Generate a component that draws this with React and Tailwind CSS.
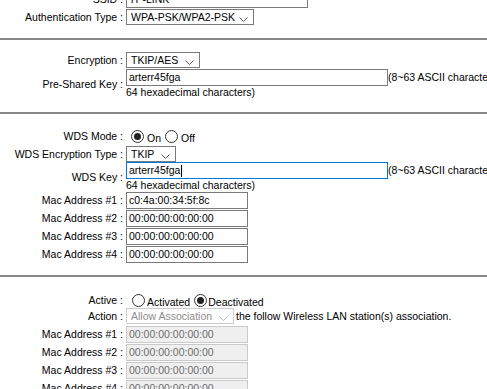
const Label = ({ children }) => (
  <div className="w-[126px] shrink-0 pr-[3px] text-right whitespace-nowrap">{children} :</div>
);

const Row = ({ label, className, children }) => (
  <div className={`flex items-center ${className}`}>
    <Label>{label}</Label>
    {children}
  </div>
);

const Chevron = ({ color }) => (
  <svg width="9" height="5" viewBox="0 0 9 5" className="mt-[4px] shrink-0">
    <path d="M0.5 0.5 L4.5 4.5 L8.5 0.5" fill="none" stroke={color} strokeWidth="1" />
  </svg>
);

const Select = ({ w, text, disabled }) => (
  <div
    className={`h-full ${w} flex items-center justify-between pl-[4px] pr-[5px] border bg-white whitespace-nowrap ${
      disabled ? 'border-[#cccccc] text-[#8d8d8d]' : 'border-[#7a7a7a] text-black'
    }`}
  >
    <span>{text}</span>
    <Chevron color={disabled ? '#b5b5b5' : '#555555'} />
  </div>
);

const Box = ({ w, text, focus, disabled, caret }) => (
  <div
    className={`h-[17px] ${w} shrink-0 flex items-center pl-[2px] border whitespace-nowrap ${
      focus ? 'border-[#0078d7] bg-white' : disabled ? 'border-[#cacaca] bg-[#efefef] text-[#6d6d6d]' : 'border-[#7a7a7a] bg-white'
    }`}
  >
    <span>{text}</span>
    {caret && <span className="w-px h-[12px] bg-black ml-px" />}
  </div>
);

const Radio = ({ on }) => (
  <span className="w-[13px] h-[13px] shrink-0 rounded-full border border-[#333333] bg-white flex items-center justify-center">
    {on && <span className="w-[7px] h-[7px] rounded-full bg-[#222222]" />}
  </span>
);

const Sep = () => <div className="h-[2px] w-full bg-[#888888]" />;

const KeyBlock = ({ label, value, focus }) => (
  <div className="flex items-center h-[30px]">
    <Label>{label}</Label>
    <div>
      <div className="flex items-center">
        <Box w="w-[262px]" text={value} focus={focus} caret={focus} />
        <span className="whitespace-nowrap">(8~63 ASCII characters or</span>
      </div>
      <div className="h-[13px] whitespace-nowrap">64 hexadecimal characters)</div>
    </div>
  </div>
);

const MacRows = ({ values, disabled }) => (
  <div>
    {values.map((v, i) => (
      <Row key={i} label={`Mac Address #${i + 1}`} className="h-[17px] mb-[1px]">
        <Box w="w-[122px]" text={v} disabled={disabled} />
      </Row>
    ))}
  </div>
);

export default function App() {
  const zero = '00:00:00:00:00:00';
  return (
    <div className="w-[487px] h-[389px] overflow-hidden bg-white text-black text-[10.5px] leading-[13px] font-['Liberation_Sans',Arial,sans-serif]">
      <div className="-mt-[9px]">
        <section className="pb-[13px]">
          <Row label="SSID" className="h-[17px]">
            <Box w="w-[182px]" text="TP-LINK" />
          </Row>
          <Row label="Authentication Type" className="h-[16px] mt-[1px]">
            <Select w="w-[128px]" text="WPA-PSK/WPA2-PSK" />
          </Row>
        </section>
        <Sep />
        <section className="pt-[12px] pb-[13px]">
          <Row label="Encryption" className="h-[16px]">
            <Select w="w-[74px]" text="TKIP/AES" />
          </Row>
          <div className="mt-[1px]">
            <KeyBlock label="Pre-Shared Key" value="arterr45fga" />
          </div>
        </section>
        <Sep />
        <section className="pt-[15px] pb-[11px]">
          <Row label="WDS Mode" className="h-[14px]">
            <div className="flex items-center ml-[5px]">
              <Radio on />
              <span className="ml-[3px] mt-[5px]">On</span>
              <span className="ml-[4px]"><Radio /></span>
              <span className="ml-[3px] mt-[5px]">Off</span>
            </div>
          </Row>
          <Row label="WDS Encryption Type" className="h-[16px] mt-[3px]">
            <Select w="w-[50px]" text="TKIP" />
          </Row>
          <KeyBlock label="WDS Key" value="arterr45fga" focus />
          <MacRows values={['c0:4a:00:34:5f:8c', zero, zero, zero]} />
        </section>
        <Sep />
        <section className="pt-[16px]">
          <Row label="Active" className="h-[14px]">
            <div className="flex items-center ml-[6px]">
              <Radio />
              <span className="ml-[2px] mt-[5px]">Activated</span>
              <span className="ml-[4px]"><Radio on /></span>
              <span className="ml-[1px] mt-[5px]">Deactivated</span>
            </div>
          </Row>
          <Row label="Action" className="h-[16px] mt-[1px]">
            <Select w="w-[108px]" text="Allow Association" disabled />
            <span className="ml-[2px] whitespace-nowrap">the follow Wireless LAN station(s) association.</span>
          </Row>
          <div className="mt-[2px]">
            <MacRows values={[zero, zero, zero, zero]} disabled />
          </div>
        </section>
      </div>
    </div>
  );
}
